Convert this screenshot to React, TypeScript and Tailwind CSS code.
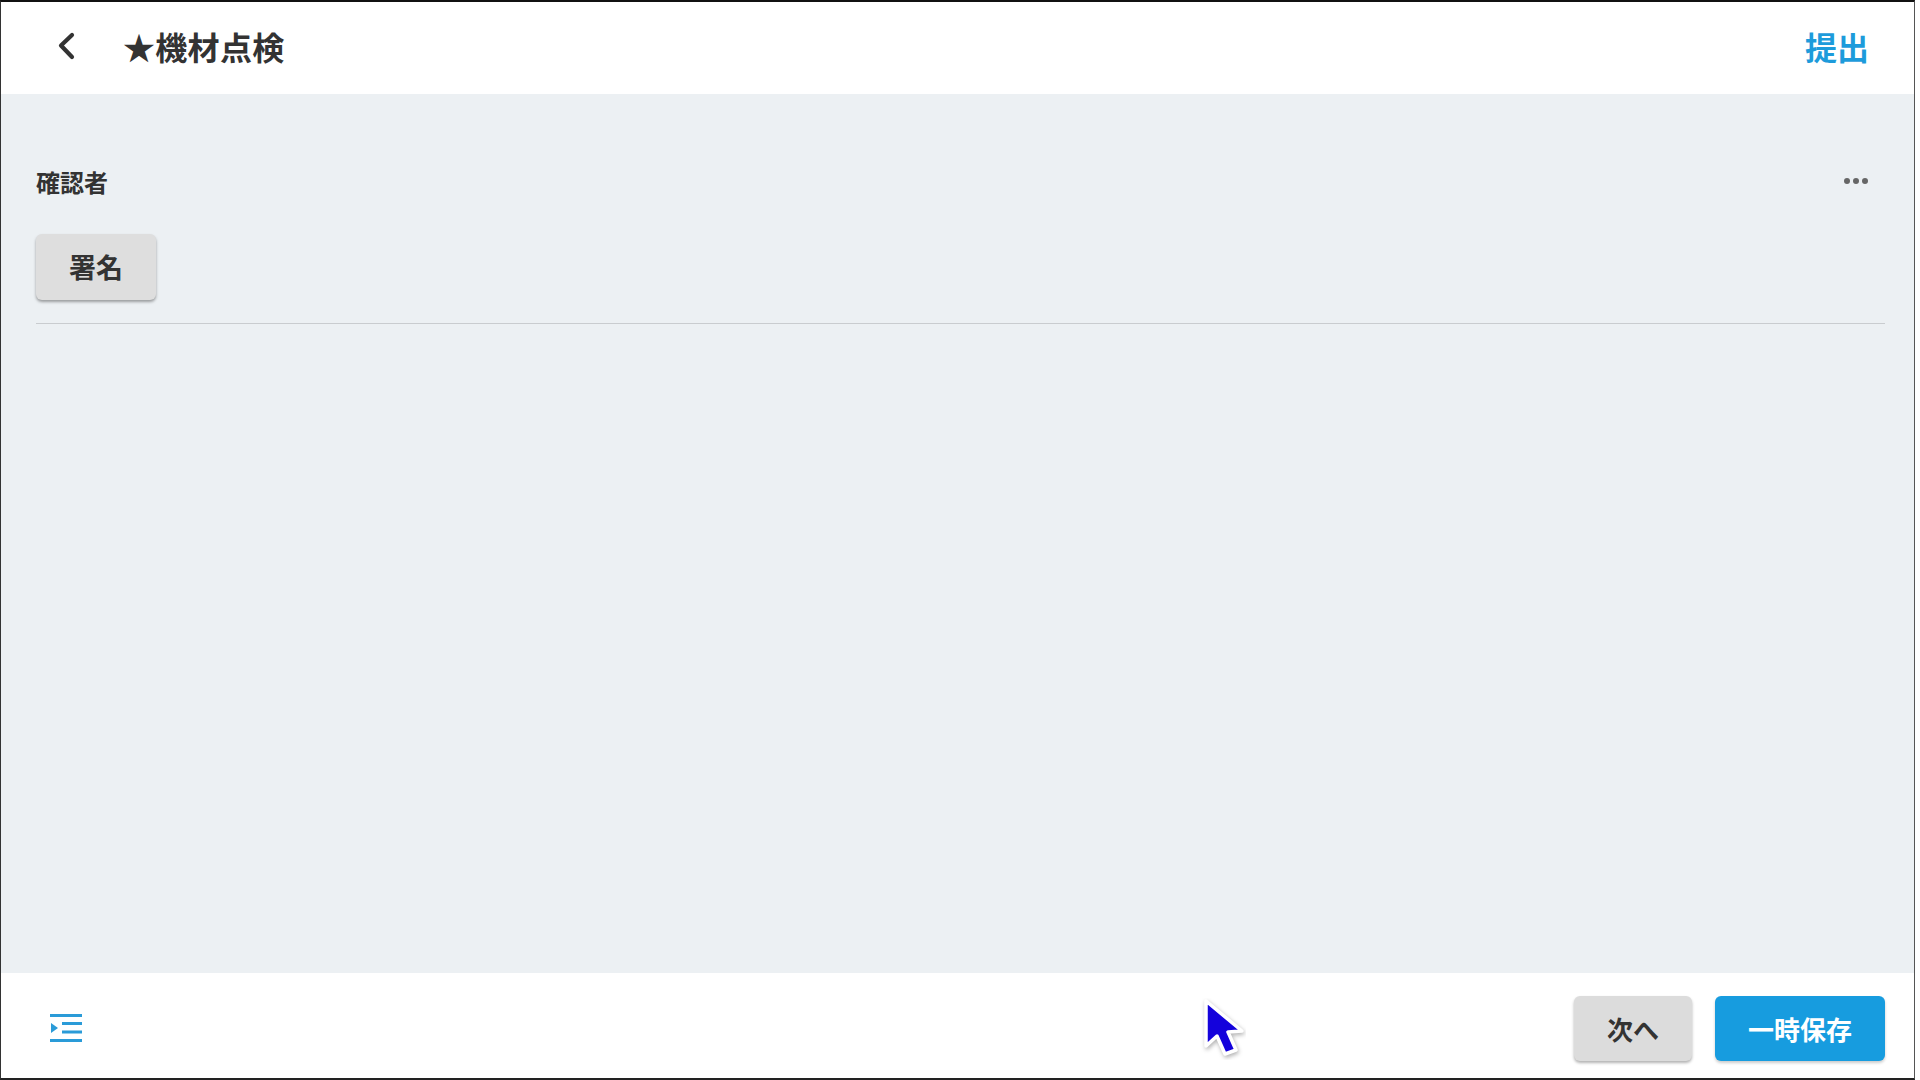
import React from "react";

const font = { fontFamily: '"Noto Sans CJK JP", "Noto Sans", sans-serif' };

export default function App() {
  return (
    <div className="w-[1920px] h-[1080px] bg-white overflow-hidden relative" style={font}>
      <div className="w-[1915px] h-[1080px] flex flex-col border border-t-2 border-b-2 border-l-[1px] border-t-[#111] border-b-[#222] border-l-[#333] border-r-[#555]">
        <header className="h-[92px] shrink-0 bg-white flex items-center pb-[4px]">
          <button className="ml-[49px] w-[34px] h-[40px] flex items-center justify-center text-[#333]">
            <svg width="24" height="32" viewBox="0 0 24 32" fill="none" stroke="currentColor" strokeWidth="4.2" strokeLinecap="round" strokeLinejoin="round">
              <path d="M17 5 L6 15.5 L17 27" />
            </svg>
          </button>
          <h1 className="ml-[39px] text-[32px] leading-[44px] font-bold tracking-[0.3px] text-[#333] whitespace-nowrap">★機材点検</h1>
          <button className="ml-auto mr-[45px] text-[32px] leading-[44px] font-bold text-[#1d9bdb]">提出</button>
        </header>
        <main className="flex-1 bg-[#ecf0f3] pl-[35px] pr-[29px] pt-[70px]">
          <div className="flex items-center justify-between h-[36px]">
            <span className="text-[24px] leading-[36px] font-bold text-[#333]">確認者</span>
            <svg className="mr-[16px] -mt-[2px]" width="26" height="8" viewBox="0 0 26 8" fill="#666">
              <circle cx="4" cy="4" r="3" />
              <circle cx="13" cy="4" r="3" />
              <circle cx="22" cy="4" r="3" />
            </svg>
          </div>
          <button className="mt-[34px] block w-[120px] h-[66px] rounded-[6px] bg-[#dedede] text-[27px] font-bold text-[#333] shadow-[0_2px_3px_rgba(0,0,0,0.35)]">
            署名
          </button>
          <div className="mt-[23px] h-px bg-[#c9cccf]" />
        </main>
        <footer className="h-[105px] shrink-0 bg-white flex items-center pl-[49px] pr-[29px] pt-[5px]">
          <svg className="mt-[1px]" width="34" height="30" viewBox="0 0 34 30" fill="#2a9bd8">
            <rect x="0" y="0" width="32" height="3" />
            <rect x="12" y="8" width="20" height="3" />
            <rect x="12" y="16.5" width="20" height="3" />
            <rect x="0" y="25" width="32" height="3" />
            <path d="M1 9 L8 14 L1 19 Z" />
          </svg>
          <button className="ml-auto w-[118px] h-[65px] rounded-[6px] bg-[#dcdcdc] text-[26px] font-bold text-[#333] shadow-[0_2px_3px_rgba(0,0,0,0.3)]">
            次へ
          </button>
          <button className="ml-[23px] w-[170px] h-[65px] rounded-[6px] bg-[#179cdf] text-[26px] font-bold text-white shadow-[0_2px_3px_rgba(0,0,0,0.2)]">
            一時保存
          </button>
        </footer>
      </div>
      <svg className="absolute left-[1198px] top-[998px]" width="48" height="62" viewBox="0 0 48 62">
        <path d="M8 3 L8 48 L19 38 L27 56 L38 52 L30 34 L44 33 Z" fill="#1402dc" stroke="#ffffff" strokeWidth="3.5" strokeLinejoin="round" style={{ filter: "drop-shadow(1px 2px 2px rgba(0,0,0,0.3))" }} />
      </svg>
    </div>
  );
}
